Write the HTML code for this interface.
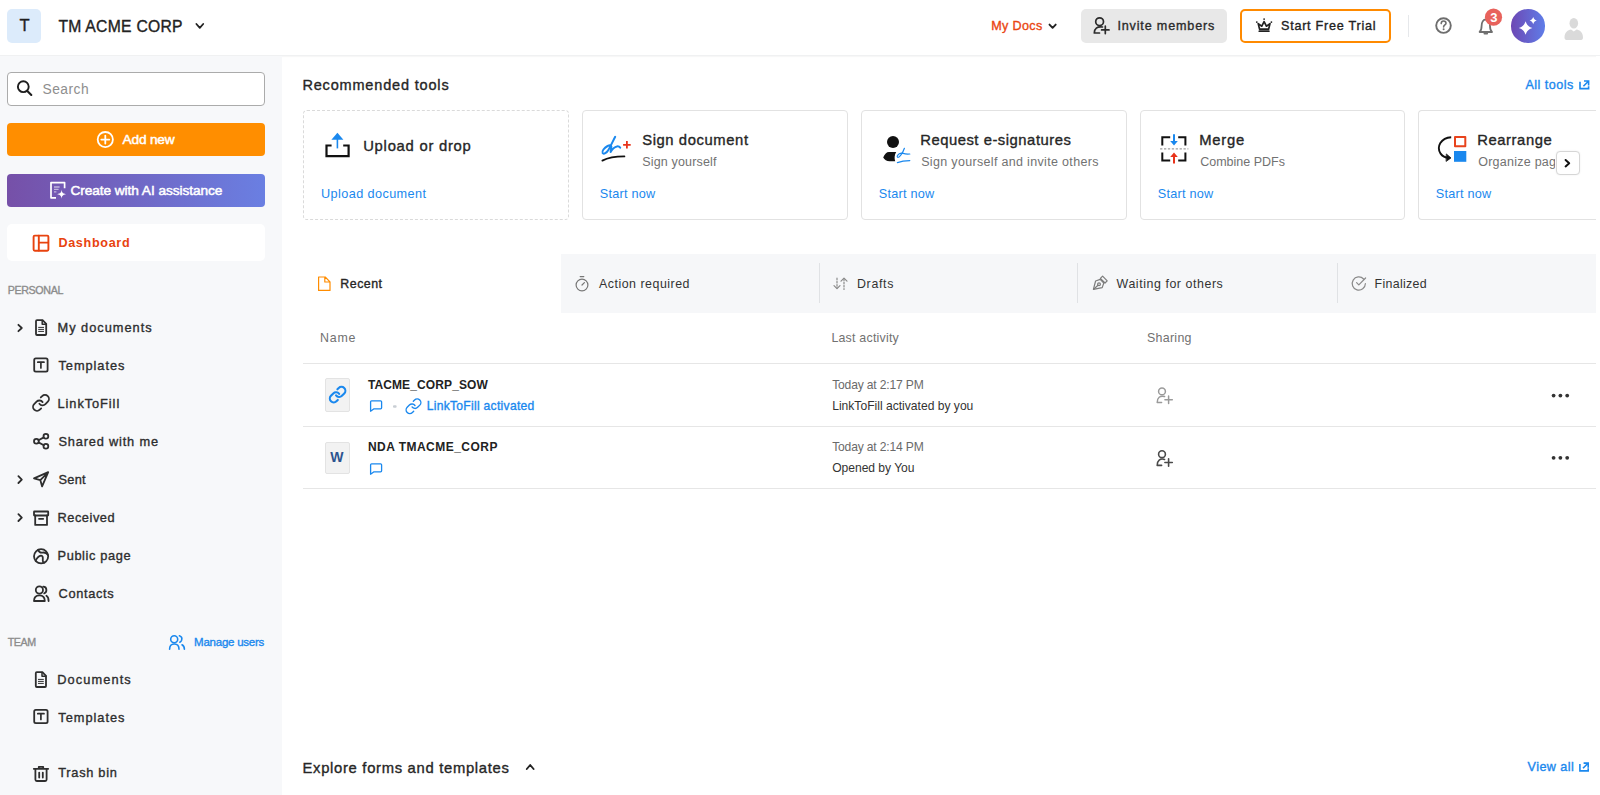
<!DOCTYPE html>
<html><head><meta charset="utf-8"><title>Dashboard</title>
<style>
html,body{margin:0;padding:0;width:1600px;height:795px;overflow:hidden;background:#fff;}
body{position:relative;font-family:"Liberation Sans",sans-serif;}
.t{position:absolute;white-space:nowrap;line-height:20px;}
.b{position:absolute;box-sizing:border-box;}
</style></head><body>
<!-- header -->
<div class="b" style="left:0;top:0;width:1600px;height:56px;background:#fff;border-bottom:1px solid #f0f1f2;box-shadow:0 1px 1px rgba(0,0,0,0.03);z-index:0;"></div>
<div class="b" style="left:7px;top:9px;width:34px;height:33.5px;background:#dcebfb;border-radius:5px;"></div>
<div class="b" style="left:1081px;top:9px;width:146px;height:33.5px;background:#e8e8e8;border-radius:5px;"></div>
<div class="b" style="left:1240px;top:9px;width:151px;height:33.5px;border:2px solid #ff8a00;border-radius:5px;"></div>
<div class="b" style="left:1408px;top:15px;width:1px;height:22px;background:#e6e8eb;"></div>
<div class="b" style="left:1511px;top:9px;width:33.5px;height:33.5px;border-radius:50%;background:linear-gradient(90deg,#6d48b4,#5f7de8);"></div>
<!-- sidebar -->
<div class="b" style="left:0;top:56px;width:281.5px;height:739px;background:#f7f8fa;"></div>
<div class="b" style="left:7px;top:72px;width:258px;height:33.5px;background:#fff;border:1px solid #ababab;border-radius:4px;"></div>
<div class="b" style="left:7px;top:123px;width:258px;height:33px;background:#ff8e00;border-radius:4px;"></div>
<div class="b" style="left:7px;top:174px;width:258px;height:33px;background:linear-gradient(90deg,#7650a8,#6a7fe2);border-radius:4px;"></div>
<div class="b" style="left:7px;top:224px;width:258px;height:37px;background:#fff;border-radius:5px;"></div>
<!-- cards -->
<div class="b" style="left:303px;top:110px;width:266px;height:109.5px;border:1px dashed #dadada;border-radius:4px;"></div>
<div class="b" style="left:582px;top:110px;width:266px;height:109.5px;border:1px solid #e2e2e2;border-radius:4px;"></div>
<div class="b" style="left:861px;top:110px;width:266px;height:109.5px;border:1px solid #e2e2e2;border-radius:4px;"></div>
<div class="b" style="left:1140px;top:110px;width:265px;height:109.5px;border:1px solid #e2e2e2;border-radius:4px;"></div>
<div class="b" style="left:1418px;top:110px;width:178px;height:109.5px;border:1px solid #e2e2e2;border-right:none;border-radius:4px 0 0 4px;"></div>
<div class="b" style="left:1596px;top:56px;width:4px;height:739px;background:#fff;"></div>
<!-- tabs -->
<div class="b" style="left:561px;top:254px;width:1035px;height:58.5px;background:#f6f7f9;"></div>
<div class="b" style="left:819px;top:263px;width:1px;height:40px;background:#e0e2e5;"></div>
<div class="b" style="left:1077px;top:263px;width:1px;height:40px;background:#e0e2e5;"></div>
<div class="b" style="left:1336.5px;top:263px;width:1px;height:40px;background:#e0e2e5;"></div>
<!-- table lines -->
<div class="b" style="left:303px;top:362.5px;width:1293px;height:1px;background:#e6e6e6;"></div>
<div class="b" style="left:303px;top:426px;width:1293px;height:1px;background:#e6e6e6;"></div>
<div class="b" style="left:303px;top:488px;width:1293px;height:1px;background:#e6e6e6;"></div>
<!-- thumbs -->
<div class="b" style="left:325px;top:378.4px;width:25px;height:33.3px;background:#f2f2f2;border:1px solid #e3e3e3;border-radius:2px;"></div>
<div class="b" style="left:325px;top:441.6px;width:25px;height:32.2px;background:#f2f2f2;border:1px solid #e3e3e3;border-radius:2px;"></div>
<div class="t" style="left:330.2px;top:447.4px;font-size:14px;font-weight:700;color:#2c5490;line-height:20px;">W</div>
<!-- arrow button -->
<div class="b" style="left:1555.5px;top:150.7px;width:24.5px;height:24.5px;background:#fff;border:1px solid #d6d6d6;border-radius:4px;box-shadow:0 0 2px rgba(0,0,0,0.08);z-index:2;"></div>

<svg width="1600" height="795" viewBox="0 0 1600 795" style="position:absolute;left:0;top:0;z-index:1" fill="none" stroke-linecap="round" stroke-linejoin="round">
<!-- header chevrons -->
<path d="M196.4 24 L199.8 27.8 L203.2 24" stroke="#222" stroke-width="1.8"/>
<path d="M1049.5 24.6 L1052.6 27.8 L1055.7 24.6" stroke="#222" stroke-width="1.9"/>
<!-- invite icon -->
<g stroke="#2b2b2b" stroke-width="1.7">
<circle cx="1099.6" cy="21.7" r="3.9"/>
<path d="M1102.5 27 C1097 26.2 1094.3 28.8 1094.3 33 H1099.5"/>
<path d="M1105.3 26.2 V33.6 M1101.6 29.9 H1109"/>
</g>
<!-- crown -->
<g stroke="#222" stroke-width="1.7">
<path d="M1258.2 23.6 L1259.6 29.2 H1268.6 L1270 23.6 L1266.4 26.2 L1264.1 21.6 L1261.8 26.2 Z"/>
<path d="M1259.3 31.2 H1268.9"/>
</g>
<circle cx="1256.8" cy="22.1" r="0.9" fill="#222"/>
<circle cx="1264.1" cy="19.1" r="0.9" fill="#222"/>
<circle cx="1271.4" cy="22.1" r="0.9" fill="#222"/>
<!-- help -->
<circle cx="1443.5" cy="25.6" r="7.3" stroke="#6e6e6e" stroke-width="1.9"/>
<path d="M1441.2 23.6 C1441.2 21.9 1442.3 21 1443.6 21 C1445 21 1446 22 1446 23.3 C1446 25 1443.6 25 1443.6 27" stroke="#6e6e6e" stroke-width="1.6"/>
<circle cx="1443.6" cy="29.3" r="1" fill="#6e6e6e"/>
<!-- bell -->
<path d="M1479.6 32 H1492 C1490.3 30.6 1490 29 1490 26 C1490 22 1488 19.5 1485.8 19.5 C1483.5 19.5 1481.6 22 1481.6 26 C1481.6 29 1481.3 30.6 1479.6 32 Z" stroke="#707070" stroke-width="1.8"/>
<path d="M1484.4 33.6 H1487.2" stroke="#707070" stroke-width="1.8"/>
<!-- AI sparkles -->
<path d="M1525.60 21.20 C1526.96 25.14 1528.46 26.64 1532.40 28.00 C1528.46 29.36 1526.96 30.86 1525.60 34.80 C1524.24 30.86 1522.74 29.36 1518.80 28.00 C1522.74 26.64 1524.24 25.14 1525.60 21.20 Z" fill="#fff"/>
<path d="M1533.20 17.00 C1533.92 19.09 1534.71 19.88 1536.80 20.60 C1534.71 21.32 1533.92 22.11 1533.20 24.20 C1532.48 22.11 1531.69 21.32 1529.60 20.60 C1531.69 19.88 1532.48 19.09 1533.20 17.00 Z" fill="#fff"/>
<!-- badge over bell -->
<circle cx="1493.5" cy="17.2" r="8.6" fill="#e8625c"/>
<!-- avatar -->
<ellipse cx="1573.8" cy="23.2" rx="4.3" ry="5.2" fill="#dadada"/>
<path d="M1564.5 37.5 C1564.5 32 1568 30 1571 29.5 L1573.8 31.5 L1576.6 29.5 C1579.6 30 1583 32 1583 37.5 C1583 39.5 1582 40 1580 40 H1567.5 C1565.5 40 1564.5 39.5 1564.5 37.5 Z" fill="#dadada"/>

<!-- search -->
<circle cx="23.3" cy="86.7" r="5.4" stroke="#1e1e1e" stroke-width="1.9"/>
<path d="M27.3 90.9 L31.3 95" stroke="#1e1e1e" stroke-width="2.1"/>
<!-- add new -->
<circle cx="105.3" cy="139.6" r="7.6" stroke="#fff" stroke-width="1.8"/>
<path d="M105.3 135.6 V143.6 M101.3 139.6 H109.3" stroke="#fff" stroke-width="1.8"/>
<!-- AI create -->
<path d="M56 197.8 H51 V182.6 H64.6 V188.2" stroke="#fff" stroke-width="1.7" stroke-linecap="butt" stroke-linejoin="round"/>
<path d="M54 187 H59.6 M54 189.4 H58.6 M54 191.8 H56.4" stroke="rgba(255,255,255,0.55)" stroke-width="1.3" stroke-linecap="butt"/>
<path d="M61.6 189.6 C61.9 192.6 62.6 193.6 66 194.2 C62.6 194.8 61.9 195.8 61.6 198.8 C61.3 195.8 60.6 194.8 57.2 194.2 C60.6 193.6 61.3 192.6 61.6 189.6 Z" fill="#fff"/>
<!-- dashboard -->
<rect x="33.6" y="235.6" width="14.8" height="15.2" rx="1.2" stroke="#e8430f" stroke-width="1.9"/>
<path d="M38.8 235.8 V250.6 M38.8 242.6 H48.2" stroke="#e8430f" stroke-width="1.9"/>

<!-- sidebar chevrons -->
<g stroke="#2b2b2b" stroke-width="1.8">
<path d="M18.4 324.8 L21.8 328 L18.4 331.2"/>
<path d="M18.4 476.2 L21.8 479.6 L18.4 483"/>
<path d="M18.4 514.2 L21.8 517.6 L18.4 521"/>
</g>
<g stroke="#2e2e2e" stroke-width="1.8">
<!-- my documents -->
<path d="M36 321.2 C36 320.6 36.5 320.2 37 320.2 H42.6 L46.2 323.8 V334 C46.2 334.6 45.7 335 45.2 335 H37 C36.5 335 36 334.6 36 334 Z"/>
<path d="M42.2 320.4 V324.2 H46" stroke-width="1.5"/>
<path d="M38.6 327.4 H43.6 M38.6 329.4 H43.6 M38.6 331.4 H43.6" stroke-width="1"/>
<!-- templates -->
<rect x="34.2" y="358.3" width="13.4" height="13.4" rx="1.6"/>
<path d="M37.8 362.2 H44 M40.9 362.2 V368" stroke-width="1.7"/>
<!-- linktofill -->
</g><g transform="translate(31.40 393.30) scale(0.8)" stroke="#2e2e2e" stroke-width="2.25" fill="none"><path d="M10 13a5 5 0 0 0 7.54.54l3-3a5 5 0 0 0-7.07-7.07l-1.72 1.71"/><path d="M14 11a5 5 0 0 0-7.54-.54l-3 3a5 5 0 0 0 7.07 7.07l1.71-1.71"/></g>
<g stroke="#2e2e2e" stroke-width="1.8">
<!-- shared -->
<circle cx="45.9" cy="436.3" r="2.4"/>
<circle cx="36.4" cy="441.3" r="2.4"/>
<circle cx="45.9" cy="446.3" r="2.4"/>
<path d="M43.8 437.4 L38.5 440.2 M38.5 442.4 L43.8 445.2"/>
<!-- sent -->
<path d="M34 478.3 L48.2 472.2 L42.1 486.4 L40.3 480.1 Z M40.3 480.1 L47.6 472.8"/>
<!-- received -->
<rect x="34" y="511.5" width="14.2" height="4" rx="0.4"/>
<path d="M35.2 515.5 V524.9 H47 V515.5 M39 518.8 H43.2"/>
<!-- public page -->
<circle cx="41.1" cy="556.3" r="7.1"/>
<path d="M35.6 560.8 C37 557.6 38.6 556 41 555.6 C42.6 555.4 43 557.2 42.8 559.4 C42.6 561.4 43.2 562.8 44.5 562.6 M38.2 549.9 C39 552 40.6 553 42.6 552.6 C44.6 552.2 46.6 553.2 48 555"/>
<!-- contacts -->
<circle cx="39.4" cy="590" r="3.6"/>
<path d="M34 601 C34 597 36.2 595.3 39.4 595.3 C42.6 595.3 44.8 597 44.8 601 Z"/>
<path d="M43.2 586.6 C45.6 586.6 46.4 588.4 46.4 590 C46.4 591.6 45.8 592.8 44.2 593.4 M46.4 595.8 C47.8 596.6 48.6 598.2 48.6 601"/>
<!-- team documents -->
<path d="M35.8 673.2 C35.8 672.6 36.3 672.2 36.8 672.2 H42.4 L46 675.8 V686 C46 686.6 45.5 687 45 687 H36.8 C36.3 687 35.8 686.6 35.8 686 Z"/>
<path d="M42 672.4 V676.2 H45.8" stroke-width="1.5"/>
<path d="M38.4 679.4 H43.4 M38.4 681.4 H43.4 M38.4 683.4 H43.4" stroke-width="1"/>
<!-- team templates -->
<rect x="34.2" y="709.8" width="13.4" height="13.4" rx="1.6"/>
<path d="M37.8 713.7 H44 M40.9 713.7 V719.5" stroke-width="1.7"/>
<!-- trash -->
<path d="M33.8 768.8 H48.2 M38.8 768.8 V766.8 H43.2 V768.8"/>
<path d="M35.4 769 V779.6 C35.4 780.4 35.9 781 36.8 781 H45.2 C46.1 781 46.6 780.4 46.6 779.6 V769 M39.2 772.6 V777.6 M42.8 772.6 V777.6"/>
</g>
<!-- manage users -->
<g stroke="#1a88ee" stroke-width="1.6">
<circle cx="174.2" cy="639.2" r="3.5"/>
<path d="M169.6 649.2 C169.6 645.6 171.6 644 174.3 644 C177 644 179 645.6 179 649.2"/>
<path d="M179.4 635.8 C181.6 636.6 182.2 638.4 181.6 640.2 C181.2 641.2 180.6 641.8 179.8 642.2 M182 644.8 C183.6 645.6 184.4 647.2 184.4 649.2"/>
</g>

<!-- all tools ext -->
<g stroke="#1a88ee" stroke-width="1.6" stroke-linecap="butt" stroke-linejoin="miter">
<path d="M1584 81 H1588.6 V85.6 M1588.4 81.2 L1583.4 86.2"/>
<path d="M1580 81.8 V88.6 H1588.6 V86.2"/>
</g>
<!-- view all ext -->
<g stroke="#1a88ee" stroke-width="1.6" stroke-linecap="butt" stroke-linejoin="miter">
<path d="M1583.6 763.1 H1588.2 V767.7 M1588 763.3 L1583 768.3"/>
<path d="M1579.9 763.9 V770.9 H1588.2 V768.3"/>
</g>

<!-- upload icon -->
<path d="M331.6 145.5 H326.5 V156.2 H348.6 V145.5 H343.2" stroke="#111" stroke-width="2.2" stroke-linecap="butt" stroke-linejoin="miter"/>
<path d="M337.4 132.8 L331.4 139.8 H343.4 Z" fill="#1a88ee"/>
<path d="M337.4 139 V148.4" stroke="#1a88ee" stroke-width="1.6" stroke-linecap="butt"/>
<!-- sign icon -->
<path d="M615.2 136.8 C613 141 610.6 146 608.4 150 C606.8 152.8 603.6 154.6 602.6 153 C601.6 151.2 604.2 147.8 607.6 146 C610.6 144.6 612 145.6 611.2 148.6 L610.6 152 C612.4 148.8 614.8 146.8 617 146.4 C618.6 146.2 619.6 146.8 620.2 147.6" stroke="#1a88ee" stroke-width="2"/>
<path d="M602.4 160.6 C608 157.6 616 156.4 624.4 156.4" stroke="#111" stroke-width="1.8"/>
<path d="M626.9 141 V148.6 M623.1 144.8 H630.7" stroke="#e8341c" stroke-width="1.8" stroke-linecap="butt"/>
<!-- request e-sign icon -->
<circle cx="893" cy="142.1" r="6" fill="#111"/>
<path d="M896.2 152 H889 C886.6 152 884.6 154 883.2 157.6 C884.6 160 886.6 161.2 889.6 161.2 H895.2 C894.2 158.4 894.4 155 896.2 152 Z" fill="#111"/>
<path d="M904.4 148.3 C903 152 901 155.6 899 157 C897.4 158 896.8 156.6 897.6 155.4 C898.8 153.4 901.4 152.8 903.2 153.4 C905.4 154.2 907.6 154.2 909.8 154 M897.4 162.6 C901 161.2 905 160.6 909.8 160.6" stroke="#1a88ee" stroke-width="1.2"/>
<!-- merge icon -->
<g stroke="#111" stroke-width="2" stroke-linecap="butt" stroke-linejoin="miter">
<path d="M1162.3 145.4 V137.3 H1170.2 M1178.2 137.3 H1185.4 V145.4"/>
<path d="M1162.3 152.4 V160.4 H1170.2 M1178.2 160.4 H1185.4 V152.4"/>
</g>
<path d="M1160.5 148.9 H1188" stroke="#888" stroke-width="1" stroke-dasharray="1.5 2.4"/>
<path d="M1174 134.2 V142" stroke="#1a88ee" stroke-width="2" stroke-linecap="butt"/>
<path d="M1170.2 141 L1174 145.4 L1177.8 141 Z" fill="#1a88ee"/>
<path d="M1174 156.6 V163.4" stroke="#e8341c" stroke-width="2" stroke-linecap="butt"/>
<path d="M1170.2 157 L1174 152.6 L1177.8 157 Z" fill="#e8341c"/>
<!-- rearrange icon -->
<rect x="1455" y="137" width="10.3" height="9.2" stroke="#e8431c" stroke-width="2"/>
<rect x="1454" y="151" width="12.3" height="10.8" fill="#1a88ee"/>
<path d="M1451.2 137.2 C1441 137.6 1436 147 1440.6 153.6 C1442.4 156.2 1445.4 157.6 1448.8 157.8" stroke="#111" stroke-width="1.9" stroke-linecap="butt"/>
<path d="M1446.6 154.2 L1451 157.9 L1446.4 161.2 Z" fill="#111" stroke="#111" stroke-width="0.8"/>

<!-- tab icons -->
<path d="M318.6 277 H325.2 L330 281.8 V290.4 H318.6 Z M324.8 277 V282 H329.8" stroke="#ff8c00" stroke-width="1.2"/>
<g stroke="#777" stroke-width="1.2">
<circle cx="582" cy="285" r="5.9"/>
<path d="M580.2 276.6 H583.8 M582 285 L584.4 282.6"/>
</g>
<g stroke="#8a8a8a" stroke-width="1.2">
<path d="M837 278.2 V288" stroke-dasharray="1.6 1.6"/>
<path d="M834 285.6 L837 288.6 L840 285.6"/>
<path d="M844 279 V289.4" stroke-dasharray="1.6 1.6"/>
<path d="M841 281.2 L844 278.2 L847 281.2"/>
</g>
<g stroke="#7c7c7c" stroke-width="1.2">
<path d="M1093.4 289.4 L1095.6 281 L1100.2 279.4 L1103.8 283 L1102.2 287.6 Z"/>
<path d="M1100.4 278.4 L1102.6 276.2 L1107.2 280.8 L1105 283 Z"/>
<circle cx="1099" cy="284.2" r="1.4"/>
<path d="M1093.6 289.2 L1098 285.2"/>
</g>
<path d="M1363.6 279 A6.6 6.6 0 1 0 1365.4 283.6 M1356.6 282.6 L1358.8 284.8 L1365.6 278" stroke="#8a8a8a" stroke-width="1.2"/>

<!-- rows -->
<g transform="translate(328.24 385.24) scale(0.78)" stroke="#1a88ee" stroke-width="2.69" fill="none"><path d="M10 13a5 5 0 0 0 7.54.54l3-3a5 5 0 0 0-7.07-7.07l-1.72 1.71"/><path d="M14 11a5 5 0 0 0-7.54-.54l-3 3a5 5 0 0 0 7.07 7.07l1.71-1.71"/></g>
<g stroke="#1a88ee" stroke-width="1.3">
<path d="M371.6 400.8 H380.6 C381.2 400.8 381.6 401.2 381.6 401.8 V407.8 C381.6 408.4 381.2 408.8 380.6 408.8 H374 L370.6 411.2 V401.8 C370.6 401.2 371 400.8 371.6 400.8 Z"/>
<path d="M371.6 463.8 H380.6 C381.2 463.8 381.6 464.2 381.6 464.8 V470.8 C381.6 471.4 381.2 471.8 380.6 471.8 H374 L370.6 474.2 V464.8 C370.6 464.2 371 463.8 371.6 463.8 Z"/>
</g>
<rect x="393" y="405.2" width="3.6" height="2.6" rx="1" fill="#c9ced4"/>
<g transform="translate(404.62 397.32) scale(0.74)" stroke="#1a88ee" stroke-width="1.89" fill="none"><path d="M10 13a5 5 0 0 0 7.54.54l3-3a5 5 0 0 0-7.07-7.07l-1.72 1.71"/><path d="M14 11a5 5 0 0 0-7.54-.54l-3 3a5 5 0 0 0 7.07 7.07l1.71-1.71"/></g>
<g stroke="#9a9a9a" stroke-width="1.5">
<circle cx="1162" cy="391.4" r="3.4"/>
<path d="M1164.6 396.6 C1160 395.4 1157.2 397.6 1157.2 402.6 H1161.6 M1168.6 396 V403.4 M1164.9 399.7 H1172.3"/>
</g>
<g stroke="#4a4a4a" stroke-width="1.6">
<circle cx="1162" cy="454.2" r="3.4"/>
<path d="M1164.6 459.4 C1160 458.2 1157.2 460.4 1157.2 465.4 H1161.6 M1168.6 458.8 V466.2 M1164.9 462.5 H1172.3"/>
</g>
<g fill="#333">
<circle cx="1553.6" cy="395.6" r="1.9"/><circle cx="1560.4" cy="395.6" r="1.9"/><circle cx="1567.2" cy="395.6" r="1.9"/>
<circle cx="1553.6" cy="457.8" r="1.9"/><circle cx="1560.4" cy="457.8" r="1.9"/><circle cx="1567.2" cy="457.8" r="1.9"/>
</g>
<!-- explore chevron -->
<path d="M526.8 769 L530.2 765 L533.6 769" stroke="#222" stroke-width="1.9"/>
</svg>
<svg width="1600" height="795" viewBox="0 0 1600 795" style="position:absolute;left:0;top:0;z-index:3;pointer-events:none" fill="none">
<path d="M1565.6 160 L1569.2 163.2 L1565.6 166.4" stroke="#111" stroke-width="2" stroke-linecap="round" stroke-linejoin="round"/>
</svg>

<div class="t" style="left:19.60px;top:16.40px;font-size:16.60px;color:#1f1f1f;-webkit-text-stroke:0.35px currentColor;">T</div>
<div class="t" style="left:58.40px;top:16.81px;font-size:15.70px;color:#222;-webkit-text-stroke:0.35px currentColor;letter-spacing:0.277px;">TM ACME CORP</div>
<div class="t" style="left:991.20px;top:15.98px;font-size:12.60px;color:#ea4510;-webkit-text-stroke:0.35px currentColor;letter-spacing:0.353px;">My Docs</div>
<div class="t" style="left:1117.40px;top:16.08px;font-size:12.60px;color:#2b2b2b;-webkit-text-stroke:0.35px currentColor;letter-spacing:0.832px;">Invite members</div>
<div class="t" style="left:1281.00px;top:15.68px;font-size:12.60px;color:#222;-webkit-text-stroke:0.35px currentColor;letter-spacing:0.753px;">Start Free Trial</div>
<div class="t" style="left:1490.20px;top:7.65px;font-size:13.00px;color:#fff;font-weight:700;z-index:4;">3</div>
<div class="t" style="left:42.50px;top:80.07px;font-size:13.80px;color:#8e8e8e;letter-spacing:0.492px;">Search</div>
<div class="t" style="left:122.50px;top:130.30px;font-size:13.70px;color:#fff;-webkit-text-stroke:0.35px currentColor;letter-spacing:-0.180px;-webkit-text-stroke:0.5px #fff;">Add new</div>
<div class="t" style="left:70.40px;top:180.70px;font-size:13.70px;color:#fff;-webkit-text-stroke:0.35px currentColor;letter-spacing:-0.067px;-webkit-text-stroke:0.5px #fff;">Create with AI assistance</div>
<div class="t" style="left:58.40px;top:232.68px;font-size:12.60px;color:#e8430f;font-weight:700;letter-spacing:0.677px;">Dashboard</div>
<div class="t" style="left:7.70px;top:280.44px;font-size:10.70px;color:#8c8c8c;-webkit-text-stroke:0.35px currentColor;letter-spacing:-0.366px;">PERSONAL</div>
<div class="t" style="left:57.50px;top:317.71px;font-size:12.80px;color:#2e2e2e;-webkit-text-stroke:0.35px currentColor;letter-spacing:0.990px;">My documents</div>
<div class="t" style="left:58.50px;top:355.71px;font-size:12.80px;color:#2e2e2e;-webkit-text-stroke:0.35px currentColor;letter-spacing:0.947px;">Templates</div>
<div class="t" style="left:57.50px;top:393.71px;font-size:12.80px;color:#2e2e2e;-webkit-text-stroke:0.35px currentColor;letter-spacing:0.934px;">LinkToFill</div>
<div class="t" style="left:58.50px;top:431.71px;font-size:12.80px;color:#2e2e2e;-webkit-text-stroke:0.35px currentColor;letter-spacing:0.816px;">Shared with me</div>
<div class="t" style="left:58.50px;top:469.71px;font-size:12.80px;color:#2e2e2e;-webkit-text-stroke:0.35px currentColor;letter-spacing:0.244px;">Sent</div>
<div class="t" style="left:57.50px;top:507.71px;font-size:12.80px;color:#2e2e2e;-webkit-text-stroke:0.35px currentColor;letter-spacing:0.538px;">Received</div>
<div class="t" style="left:57.50px;top:545.71px;font-size:12.80px;color:#2e2e2e;-webkit-text-stroke:0.35px currentColor;letter-spacing:0.614px;">Public page</div>
<div class="t" style="left:58.50px;top:583.71px;font-size:12.80px;color:#2e2e2e;-webkit-text-stroke:0.35px currentColor;letter-spacing:0.671px;">Contacts</div>
<div class="t" style="left:7.70px;top:632.04px;font-size:10.70px;color:#8c8c8c;-webkit-text-stroke:0.35px currentColor;letter-spacing:-0.395px;">TEAM</div>
<div class="t" style="left:194.10px;top:631.97px;font-size:11.50px;color:#1a88ee;-webkit-text-stroke:0.35px currentColor;letter-spacing:-0.239px;">Manage users</div>
<div class="t" style="left:57.30px;top:669.71px;font-size:12.80px;color:#2e2e2e;-webkit-text-stroke:0.35px currentColor;letter-spacing:1.085px;">Documents</div>
<div class="t" style="left:58.30px;top:707.71px;font-size:12.80px;color:#2e2e2e;-webkit-text-stroke:0.35px currentColor;letter-spacing:0.972px;">Templates</div>
<div class="t" style="left:58.30px;top:763.31px;font-size:12.80px;color:#2e2e2e;-webkit-text-stroke:0.35px currentColor;letter-spacing:0.706px;">Trash bin</div>
<div class="t" style="left:302.40px;top:75.33px;font-size:14.50px;color:#262626;-webkit-text-stroke:0.35px currentColor;letter-spacing:0.829px;">Recommended tools</div>
<div class="t" style="left:1525.50px;top:74.98px;font-size:12.60px;color:#1a88ee;-webkit-text-stroke:0.35px currentColor;letter-spacing:0.463px;">All tools</div>
<div class="t" style="left:363.20px;top:136.02px;font-size:14.80px;color:#262626;-webkit-text-stroke:0.35px currentColor;letter-spacing:0.750px;">Upload or drop</div>
<div class="t" style="left:321.00px;top:183.85px;font-size:12.70px;color:#1a88ee;letter-spacing:0.398px;">Upload document</div>
<div class="t" style="left:642.20px;top:129.52px;font-size:14.80px;color:#262626;-webkit-text-stroke:0.35px currentColor;letter-spacing:0.592px;">Sign document</div>
<div class="t" style="left:642.20px;top:152.22px;font-size:12.50px;color:#727272;letter-spacing:0.168px;">Sign yourself</div>
<div class="t" style="left:599.80px;top:183.85px;font-size:12.70px;color:#1a88ee;letter-spacing:0.221px;">Start now</div>
<div class="t" style="left:920.20px;top:129.52px;font-size:14.80px;color:#262626;-webkit-text-stroke:0.35px currentColor;letter-spacing:0.529px;">Request e-signatures</div>
<div class="t" style="left:921.20px;top:152.22px;font-size:12.50px;color:#727272;letter-spacing:0.326px;">Sign yourself and invite others</div>
<div class="t" style="left:878.80px;top:183.85px;font-size:12.70px;color:#1a88ee;letter-spacing:0.221px;">Start now</div>
<div class="t" style="left:1199.20px;top:129.52px;font-size:14.80px;color:#262626;-webkit-text-stroke:0.35px currentColor;letter-spacing:0.772px;">Merge</div>
<div class="t" style="left:1200.20px;top:152.22px;font-size:12.50px;color:#727272;">Combine PDFs</div>
<div class="t" style="left:1157.80px;top:183.85px;font-size:12.70px;color:#1a88ee;letter-spacing:0.221px;">Start now</div>
<div class="t" style="left:1477.20px;top:129.52px;font-size:14.80px;color:#262626;-webkit-text-stroke:0.35px currentColor;letter-spacing:0.577px;">Rearrange</div>
<div class="t" style="left:1478.20px;top:152.22px;font-size:12.50px;color:#727272;width:76.8px;overflow:hidden;letter-spacing:0.25px;">Organize pages</div>
<div class="t" style="left:1435.80px;top:183.85px;font-size:12.70px;color:#1a88ee;letter-spacing:0.221px;">Start now</div>
<div class="t" style="left:340.30px;top:273.95px;font-size:12.40px;color:#262626;-webkit-text-stroke:0.35px currentColor;letter-spacing:0.497px;">Recent</div>
<div class="t" style="left:599.00px;top:273.95px;font-size:12.40px;color:#333;letter-spacing:0.511px;">Action required</div>
<div class="t" style="left:857.00px;top:273.95px;font-size:12.40px;color:#333;letter-spacing:0.670px;">Drafts</div>
<div class="t" style="left:1116.60px;top:273.95px;font-size:12.40px;color:#333;letter-spacing:0.562px;">Waiting for others</div>
<div class="t" style="left:1374.60px;top:273.95px;font-size:12.40px;color:#333;letter-spacing:0.313px;">Finalized</div>
<div class="t" style="left:320.00px;top:328.05px;font-size:12.40px;color:#717171;letter-spacing:0.813px;">Name</div>
<div class="t" style="left:831.40px;top:328.05px;font-size:12.40px;color:#717171;letter-spacing:0.222px;">Last activity</div>
<div class="t" style="left:1147.00px;top:328.05px;font-size:12.40px;color:#717171;letter-spacing:0.297px;">Sharing</div>
<div class="t" style="left:367.90px;top:374.99px;font-size:12.00px;color:#222;font-weight:700;letter-spacing:0.113px;">TACME_CORP_SOW</div>
<div class="t" style="left:426.70px;top:396.16px;font-size:12.10px;color:#1a88ee;-webkit-text-stroke:0.35px currentColor;letter-spacing:0.287px;">LinkToFill activated</div>
<div class="t" style="left:832.20px;top:374.96px;font-size:12.10px;color:#6a6a6a;letter-spacing:-0.169px;">Today at 2:17 PM</div>
<div class="t" style="left:832.20px;top:396.16px;font-size:12.10px;color:#333;">LinkToFill activated by you</div>
<div class="t" style="left:367.90px;top:437.19px;font-size:12.00px;color:#222;font-weight:700;letter-spacing:0.476px;">NDA TMACME_CORP</div>
<div class="t" style="left:832.20px;top:436.96px;font-size:12.10px;color:#6a6a6a;letter-spacing:-0.169px;">Today at 2:14 PM</div>
<div class="t" style="left:832.20px;top:458.06px;font-size:12.10px;color:#333;letter-spacing:-0.034px;">Opened by You</div>
<div class="t" style="left:302.50px;top:757.82px;font-size:14.80px;color:#262626;-webkit-text-stroke:0.35px currentColor;letter-spacing:0.695px;">Explore forms and templates</div>
<div class="t" style="left:1527.60px;top:757.08px;font-size:12.60px;color:#1a88ee;-webkit-text-stroke:0.35px currentColor;letter-spacing:0.419px;">View all</div>
</body></html>
